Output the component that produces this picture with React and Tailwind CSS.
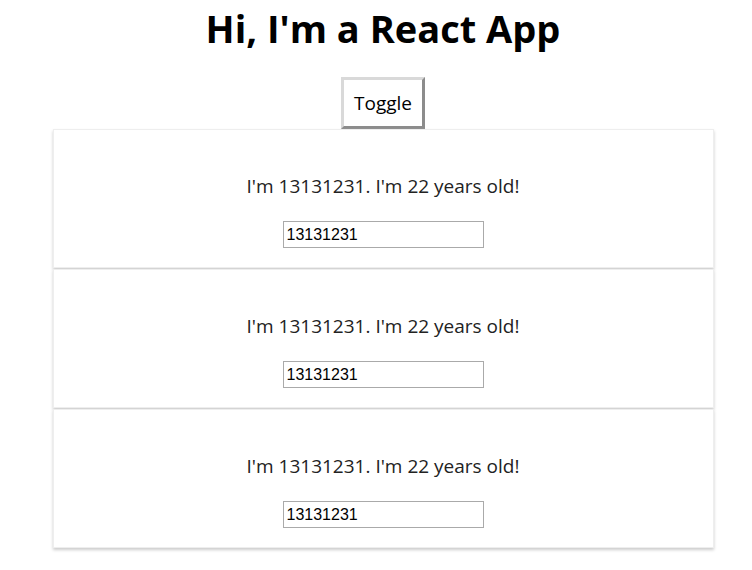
import React, { useState } from 'react';

const people = [
  { id: 1, name: '13131231', age: 22 },
  { id: 2, name: '13131231', age: 22 },
  { id: 3, name: '13131231', age: 22 },
];

const Person = ({ name, age, onChange }) => (
  <div className="w-[661px] h-[139px] mx-auto flex flex-col items-center border border-[#eeeeee] shadow-[0_2px_3px_#cccccc] bg-white">
    <p className="mt-[44px] text-[19px] leading-6 text-[#222]">
      I'm {name}. I'm {age} years old!
    </p>
    <input
      type="text"
      value={name}
      onChange={onChange}
      className="mt-[23px] w-[201px] h-[27px] border border-[#aaaaaa] px-[3px] text-[16px] text-black font-['Liberation_Sans',Arial,sans-serif] outline-none"
    />
  </div>
);

const App = () => {
  const [persons, setPersons] = useState(people);
  const [show, setShow] = useState(true);

  const nameChanged = (id, value) => {
    setPersons(persons.map((p) => (p.id === id ? { ...p, name: value } : p)));
  };

  return (
    <div className="w-[766px] text-center font-['Open_Sans','Noto_Sans',sans-serif] bg-white min-h-[570px]">
      {/* Header */}
      <h1 className="pt-[2px] text-[38px] leading-[52px] font-bold text-black">Hi, I'm a React App</h1>

      <button
        onClick={() => setShow(!show)}
        className="mt-[23px] w-[84px] h-[52px] bg-white text-[19px] text-black border-[3px] border-t-[#d9d9d9] border-l-[#d9d9d9] border-r-[#8c8c8c] border-b-[#8c8c8c]"
      >
        Toggle
      </button>

      {show && (
        <div className="flex flex-col gap-[1px]">
          {persons.map((p) => (
            <Person key={p.id} name={p.name} age={p.age} onChange={(e) => nameChanged(p.id, e.target.value)} />
          ))}
        </div>
      )}
    </div>
  );
};

export default App;
